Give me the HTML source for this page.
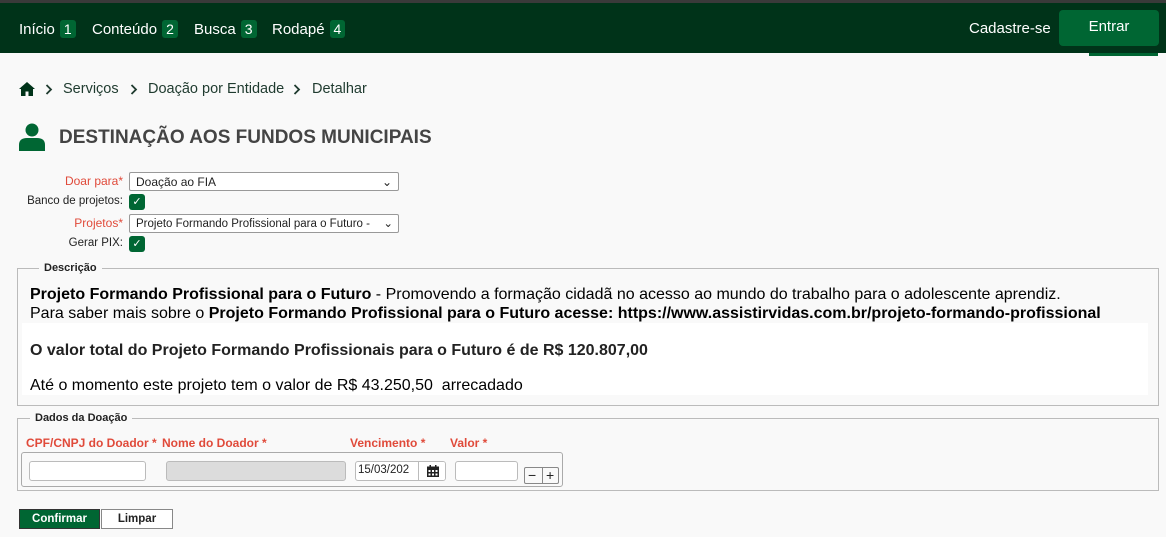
<!DOCTYPE html>
<html><head><meta charset="utf-8"><style>
*{box-sizing:border-box;margin:0;padding:0}
body{width:1166px;height:537px;overflow:hidden;background:#f9f9f9;font-family:"Liberation Sans","DejaVu Sans",sans-serif;position:relative;color:#222}
.abs{position:absolute}
.top{left:0;top:0;width:1166px;height:53px;background:#003319;border-top:3px solid #3a3a3a}
.nav{top:20px;color:#fff;font-size:15px}
.num{display:inline-block;background:#006633;color:#fff;border-radius:3px;padding:0 4px;margin-left:5px;font-size:14px;line-height:18px}
.entrar{left:1059px;top:10px;width:100px;height:36px;background:#006633;border-radius:4px;color:#fff;font-size:15px;text-align:center;line-height:34px}
.lbl{font-size:12px;text-align:right;width:123px;left:0}
.red{color:#e04a3a}
.sel{background:#fff;border:1px solid #999;border-radius:2px;font-size:12px;padding:2px 6px;height:19px;line-height:14px}
.chk{width:16px;height:16px;background:#006633;border-radius:3px;color:#fff;font-size:11px;text-align:center;line-height:16px}
fieldset{position:absolute;border:1px solid #bbb}
.leg{background:#f9f9f9;font-size:11px;font-weight:bold;padding:0 5px}
.d{font-size:16px;color:#000;left:30px}
.inp{background:#fff;border:1px solid #bbb;border-radius:3px;height:20px}
.bc{top:81px;font-size:14.5px;color:#1f3b2f}
.chev{top:84px}
</style></head><body>
<div class="abs top"></div>
<div class="abs nav" style="left:19px">Início<span class="num">1</span></div>
<div class="abs nav" style="left:92px">Conteúdo<span class="num">2</span></div>
<div class="abs nav" style="left:194px">Busca<span class="num">3</span></div>
<div class="abs nav" style="left:272px">Rodapé<span class="num">4</span></div>
<div class="abs nav" style="left:969px;top:20px">Cadastre-se</div>
<div class="abs entrar">Entrar</div>
<div class="abs" style="left:1089px;top:53px;width:69px;height:3px;background:#006633"></div>
<svg class="abs" style="left:19px;top:82px" width="16" height="14" viewBox="0 0 16 14"><path d="M8 0L0 7h2v7h4.5V9.5h3V14H14V7h2z" fill="#003319"/></svg>
<svg class="abs chev" style="left:45px" width="8" height="11" viewBox="0 0 8 11"><path d="M1.5 1l4.5 4.5L1.5 10" stroke="#1f3b2f" stroke-width="1.8" fill="none"/></svg>
<div class="abs bc" style="left:63px">Serviços</div>
<svg class="abs chev" style="left:130px" width="8" height="11" viewBox="0 0 8 11"><path d="M1.5 1l4.5 4.5L1.5 10" stroke="#1f3b2f" stroke-width="1.8" fill="none"/></svg>
<div class="abs bc" style="left:148px">Doação por Entidade</div>
<svg class="abs chev" style="left:293px" width="8" height="11" viewBox="0 0 8 11"><path d="M1.5 1l4.5 4.5L1.5 10" stroke="#1f3b2f" stroke-width="1.8" fill="none"/></svg>
<div class="abs bc" style="left:312px">Detalhar</div>
<svg class="abs" style="left:19px;top:123px" width="26" height="28" viewBox="0 0 26 28"><circle cx="13" cy="7" r="6.5" fill="#006633"/><path d="M0 28v-6q0-7 8-7h10q8 0 8 7v6z" fill="#006633"/></svg>
<div class="abs" style="left:59px;top:127px;font-size:19px;font-weight:bold;color:#444">DESTINAÇÃO AOS FUNDOS MUNICIPAIS</div>
<div class="abs lbl red" style="top:174px">Doar para*</div>
<div class="abs sel" style="left:129px;top:172px;width:270px">Doação ao FIA<span style="float:right">⌄</span></div>
<div class="abs lbl" style="top:195px;font-size:11.5px">Banco de projetos:</div>
<div class="abs chk" style="left:129px;top:194px">✓</div>
<div class="abs lbl red" style="top:216px">Projetos*</div>
<div class="abs sel" style="left:129px;top:214px;width:270px;font-size:11.5px;white-space:nowrap;overflow:hidden">Projeto Formando Profissional para o Futuro -<span style="position:absolute;right:5px">⌄</span></div>
<div class="abs lbl" style="top:237px;font-size:11.5px">Gerar PIX:</div>
<div class="abs chk" style="left:129px;top:236px">✓</div>
<fieldset style="left:17px;top:268px;width:1142px;height:138px"></fieldset>
<div class="abs leg" style="left:39px;top:262px">Descrição</div>
<div class="abs" style="left:22px;top:323px;width:1126px;height:72px;background:#fff"></div>
<div class="abs d" style="top:286px"><b>Projeto Formando Profissional para o Futuro</b> - Promovendo a formação cidadã no acesso ao mundo do trabalho para o adolescente aprendiz.</div>
<div class="abs d" style="top:305px">Para saber mais sobre o <b>Projeto Formando Profissional para o Futuro acesse: https://www.assistirvidas.com.br/projeto-formando-profissional</b></div>
<div class="abs d" style="top:342px;color:#222"><b>O valor total do Projeto Formando Profissionais para o Futuro é de R$ 120.807,00</b></div>
<div class="abs d" style="top:377px">Até o momento este projeto tem o valor de R$ 43.250,50&nbsp; arrecadado</div>
<fieldset style="left:17px;top:418px;width:1142px;height:73px"></fieldset>
<div class="abs leg" style="left:30px;top:412px">Dados da Doação</div>
<div class="abs red" style="left:26px;top:436px;font-size:12px;font-weight:bold">CPF/CNPJ do Doador *</div>
<div class="abs red" style="left:162px;top:436px;font-size:12px;font-weight:bold">Nome do Doador *</div>
<div class="abs red" style="left:350px;top:436px;font-size:12px;font-weight:bold">Vencimento *</div>
<div class="abs red" style="left:450px;top:436px;font-size:12px;font-weight:bold">Valor *</div>
<div class="abs" style="left:21px;top:452px;width:542px;height:35px;border:1px solid #aaa;border-radius:3px"></div>
<div class="abs inp" style="left:29px;top:461px;width:117px"></div>
<div class="abs inp" style="left:166px;top:461px;width:180px;background:#dcdcdc"></div>
<div class="abs inp" style="left:355px;top:461px;width:91px;font-size:11.5px;padding:2px 2px;white-space:nowrap;overflow:hidden">15/03/202<span style="position:absolute;left:62px;top:0;width:28px;height:18px;border-left:1px solid #bbb;background:#fff"><svg style="position:absolute;left:8px;top:3px" width="12" height="12" viewBox="0 0 12 12"><rect x="0" y="1.5" width="12" height="10.5" fill="#222"/><rect x="2.5" y="0" width="1.5" height="3" fill="#222"/><rect x="8" y="0" width="1.5" height="3" fill="#222"/><g fill="#fff"><rect x="1.5" y="5" width="2" height="2"/><rect x="5" y="5" width="2" height="2"/><rect x="8.5" y="5" width="2" height="2"/><rect x="1.5" y="8.5" width="2" height="2"/><rect x="5" y="8.5" width="2" height="2"/><rect x="8.5" y="8.5" width="2" height="2"/></g></svg></span></div>
<div class="abs inp" style="left:455px;top:461px;width:63px"></div>
<div class="abs" style="left:524px;top:467px;width:35px;height:17px;border:1px solid #888;border-radius:2px;font-size:14px;line-height:14px"><span style="position:absolute;left:3px">−</span><span style="position:absolute;left:17px;top:0;height:15px;border-left:1px solid #888;padding-left:3px">+</span></div>
<div class="abs" style="left:19px;top:509px;width:81px;height:20px;background:#006633;border:1px solid #333;color:#fff;font-size:11.5px;font-weight:bold;text-align:center;line-height:18px">Confirmar</div>
<div class="abs" style="left:101px;top:509px;width:72px;height:20px;background:#fff;border:1px solid #888;font-size:11.5px;font-weight:bold;text-align:center;line-height:18px">Limpar</div>
</body></html>
